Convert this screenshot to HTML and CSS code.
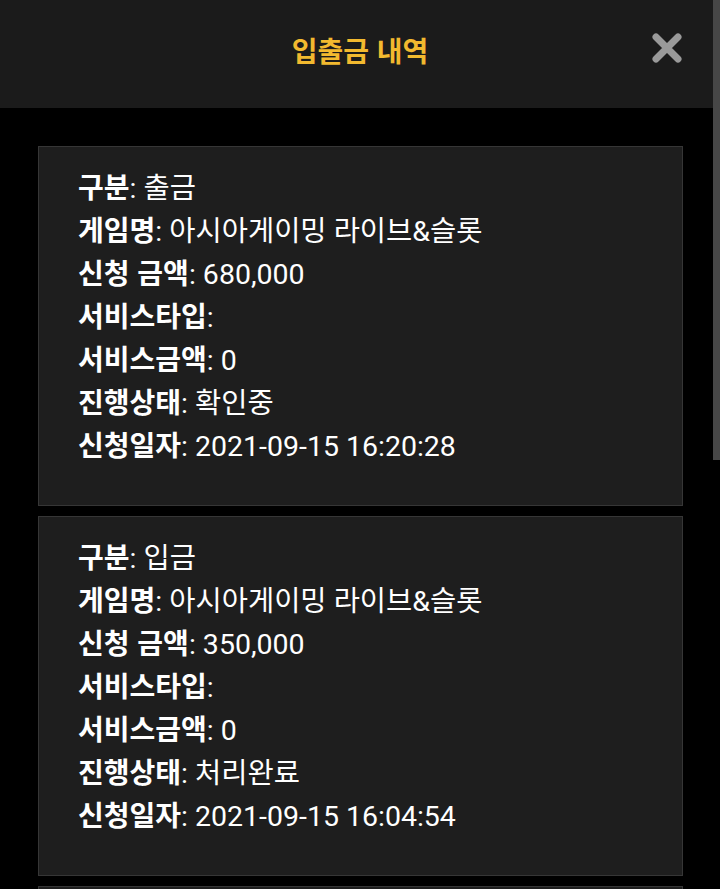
FILE: index.html
```html
<!DOCTYPE html>
<html lang="ko">
<head>
<meta charset="utf-8">
<link rel="stylesheet" href="styles.css">
</head>
<body>
<header class="header">
  <h1 class="title">입출금 내역</h1>
  <button class="close" aria-label="닫기">
    <svg width="32" height="32" viewBox="0 0 32 32"><path d="M5 5 L27 27 M27 5 L5 27" stroke="#9a9a9a" stroke-width="7" stroke-linecap="round"/></svg>
  </button>
</header>
<main class="list">
  <section class="card">
    <p class="row"><b>구분</b><span>: 출금</span></p>
    <p class="row"><b>게임명</b><span>: 아시아게이밍 라이브&amp;슬롯</span></p>
    <p class="row"><b>신청 금액</b><span>: 680,000</span></p>
    <p class="row"><b>서비스타입</b><span>:</span></p>
    <p class="row"><b>서비스금액</b><span>: 0</span></p>
    <p class="row"><b>진행상태</b><span>: 확인중</span></p>
    <p class="row"><b>신청일자</b><span>: 2021-09-15 16:20:28</span></p>
  </section>
  <section class="card">
    <p class="row"><b>구분</b><span>: 입금</span></p>
    <p class="row"><b>게임명</b><span>: 아시아게이밍 라이브&amp;슬롯</span></p>
    <p class="row"><b>신청 금액</b><span>: 350,000</span></p>
    <p class="row"><b>서비스타입</b><span>:</span></p>
    <p class="row"><b>서비스금액</b><span>: 0</span></p>
    <p class="row"><b>진행상태</b><span>: 처리완료</span></p>
    <p class="row"><b>신청일자</b><span>: 2021-09-15 16:04:54</span></p>
  </section>
  <section class="card card-next"></section>
</main>
<div class="scrollbar"></div>
</body>
</html>
```

FILE: styles.css
```css
html, body {
  margin: 0;
  padding: 0;
  background: #000;
  overflow: hidden;
  height: 889px;
}
body {
  font-family: Roboto, "Noto Sans CJK KR", sans-serif;
  color: #fff;
  position: relative;
}
.header {
  height: 108px;
  background: #1b1b1b;
  display: flex;
  align-items: flex-start;
  justify-content: center;
  position: relative;
}
.title {
  margin: 30px 0 0;
  font-family: "Noto Sans CJK KR", sans-serif;
  font-size: 28px;
  font-weight: 700;
  line-height: 40px;
  color: #f2b92f;
}
.close {
  position: absolute;
  right: 37px;
  top: 32px;
  width: 32px;
  height: 32px;
  padding: 0;
  border: 0;
  background: none;
}
.close svg { display: block; }
.list {
  padding: 38px 37px 0 38px;
  display: flex;
  flex-direction: column;
  gap: 10px;
}
.card {
  background: #1e1e1e;
  border: 1px solid #363636;
  padding: 18px 0 39px 39px;
}
.card-next {
  height: 200px;
  padding: 0;
}
.row {
  margin: 0;
  height: 43px;
  display: flex;
  align-items: baseline;
  font-size: 28.5px;
  line-height: 43px;
  white-space: pre;
}
.row b {
  font-family: "Noto Sans CJK KR", sans-serif;
  font-size: 28px;
  font-weight: 700;
}
.scrollbar {
  position: absolute;
  right: 0;
  top: 0;
  width: 7px;
  height: 460px;
  background: #474747;
}
```
